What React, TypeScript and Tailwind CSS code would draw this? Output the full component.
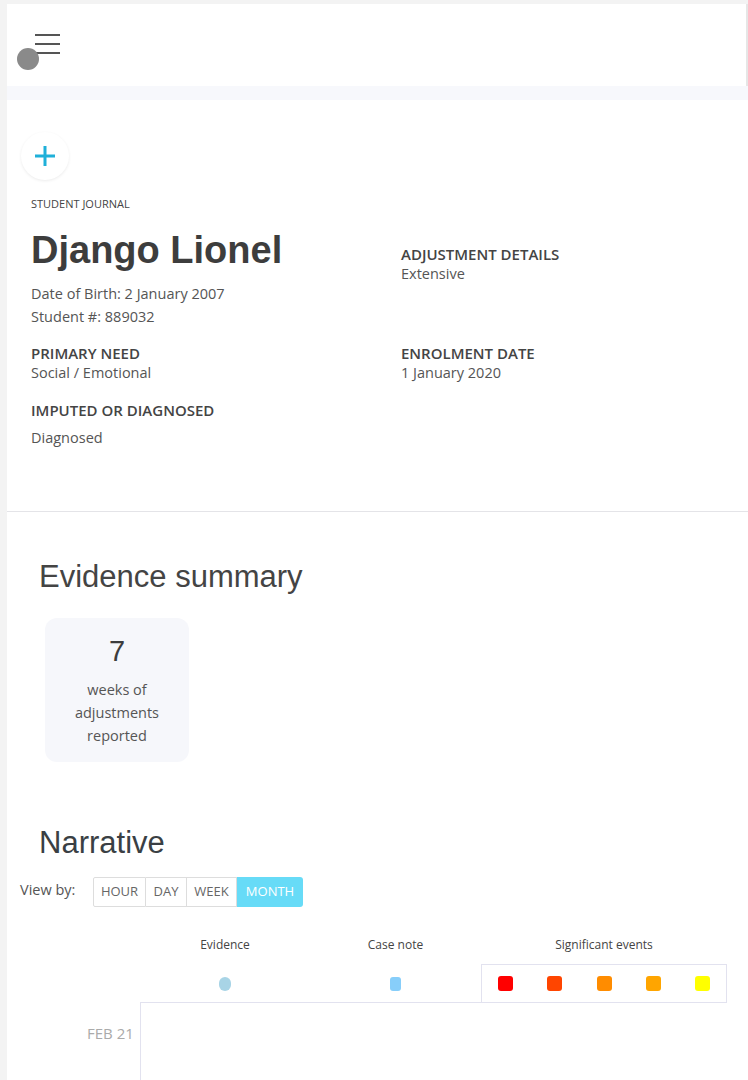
const body = "font-['Open_Sans',sans-serif]";
const head = "font-['Liberation_Sans',Arial,sans-serif]";

function Label({ children, className = "" }: { children: string; className?: string }) {
  return <div className={`text-[15px] font-semibold leading-[20px] text-[#444] ${className}`}>{children}</div>;
}

function Value({ children, className = "" }: { children: string; className?: string }) {
  return <div className={`text-[14.5px] leading-[20px] text-[#555] ${className}`}>{children}</div>;
}

export default function App() {
  return (
    <div className={`min-h-screen bg-[#f3f3f3] pl-[7px] pt-[4px] ${body}`}>
      <header className="relative h-[82px] border-r-2 border-[#e6e6e6] bg-white">
        <div className="absolute left-[28px] top-[30px] flex w-[25px] flex-col gap-[7.5px]">
          <span className="h-[1.5px] bg-[#555]" />
          <span className="h-[1.5px] bg-[#555]" />
          <span className="h-[1.5px] bg-[#555]" />
        </div>
        <span className="absolute left-[10px] top-[44px] h-[22px] w-[22px] rounded-full bg-[#8a8a8a]" />
      </header>
      <div className="h-[14px] bg-[#f7f8fc]" />

      <main className="bg-white pb-[40px]">
        <section className="px-[14px] pb-[63px] pt-[32px]">
          <button className="flex h-[48px] w-[48px] items-center justify-center rounded-full bg-white shadow-[0_1px_3px_rgba(0,0,0,0.08)]">
            <svg width="22" height="22" viewBox="0 0 22 22">
              <path d="M11 1v20M1 11h20" stroke="#1fb0d9" strokeWidth="3" />
            </svg>
          </button>
          <div className="px-[10px]">
            <div className="mt-[16px] text-[11px] leading-[16px] text-[#444]">STUDENT JOURNAL</div>
            <div className="mt-[14px] grid grid-cols-[370px_1fr]">
              <div>
                <h1 className={`${head} text-[38px] font-bold leading-[48px] text-[#3d3d3d]`}>Django Lionel</h1>
                <Value className="mt-[8px] leading-[23px]">Date of Birth: 2 January 2007</Value>
                <Value className="leading-[23px]">Student #: 889032</Value>
              </div>
              <div className="pt-[18px]">
                <Label>ADJUSTMENT DETAILS</Label>
                <Value>Extensive</Value>
              </div>
              <div className="mt-[15px]">
                <Label>PRIMARY NEED</Label>
                <Value>Social / Emotional</Value>
                <Label className="mt-[17px]">IMPUTED OR DIAGNOSED</Label>
                <Value className="mt-[8px]">Diagnosed</Value>
              </div>
              <div className="mt-[15px]">
                <Label>ENROLMENT DATE</Label>
                <Value>1 January 2020</Value>
              </div>
            </div>
          </div>
        </section>

        <div className="h-px bg-[#e4e4e8]" />

        <section className="px-[32px] pt-[48px]">
          <h2 className={`${head} text-[31px] leading-[34px] text-[#444]`}>Evidence summary</h2>
          <div className="ml-[6px] mt-[24px] flex h-[144px] w-[144px] flex-col items-center rounded-[12px] bg-[#f6f7fb] pt-[16px] text-center">
            <div className={`${head} text-[29px] leading-[34px] text-[#3d3d3d]`}>7</div>
            <div className="mt-[10px] text-[14.5px] leading-[23px] text-[#555]">
              weeks of
              <br />
              adjustments
              <br />
              reported
            </div>
          </div>
          <h2 className={`${head} mt-[63px] text-[31px] leading-[36px] text-[#3a3f44]`}>Narrative</h2>
        </section>

        <div className="mt-[16px] flex items-start px-[13px]">
          <span className="mt-[3px] w-[73px] text-[14.5px] leading-[20px] text-[#555]">View by:</span>
          <div className="flex h-[30px] text-[13px] text-[#666]">
            <button className="w-[53px] rounded-l-[2px] border border-[#ddd]">HOUR</button>
            <button className="w-[41px] border-y border-r border-[#ddd]">DAY</button>
            <button className="w-[50px] border-y border-r border-[#ddd]">WEEK</button>
            <button className="w-[66px] rounded-r-[3px] bg-[#67dbf7] text-white">MONTH</button>
          </div>
        </div>

        <div className="mt-[30px] pl-[133px] pr-[21px]">
          <div className="flex text-[12px] leading-[16px] text-[#444]">
            <div className="flex w-[341px]">
              <div className="flex w-[170px] flex-col items-center">
                <span>Evidence</span>
                <span className="mt-[24px] h-[14px] w-[12px] rounded-full bg-[#a8d4e6]" />
              </div>
              <div className="flex w-[171px] flex-col items-center">
                <span>Case note</span>
                <span className="mt-[24px] h-[14px] w-[11px] rounded-[3px] bg-[#87cefa]" />
              </div>
            </div>
            <div className="flex flex-1 flex-col items-center">
              <span>Significant events</span>
              <div className="mt-[11px] flex h-[39px] w-full items-center justify-between border border-[#e2e2ef] px-[16px]">
                <span className="h-[15px] w-[15px] rounded-[3px] bg-[#ff0000]" />
                <span className="h-[15px] w-[15px] rounded-[3px] bg-[#ff4500]" />
                <span className="h-[15px] w-[15px] rounded-[3px] bg-[#ff8c00]" />
                <span className="h-[15px] w-[15px] rounded-[3px] bg-[#ffa500]" />
                <span className="h-[15px] w-[15px] rounded-[3px] bg-[#ffff00]" />
              </div>
            </div>
          </div>
          <div className="relative -mt-px h-[120px] w-[348px] border-l border-t border-[#e2e2ef]">
            <span className="absolute -left-[54px] top-[19px] text-[15px] text-[#aaa]">FEB 21</span>
          </div>
        </div>
      </main>
    </div>
  );
}
